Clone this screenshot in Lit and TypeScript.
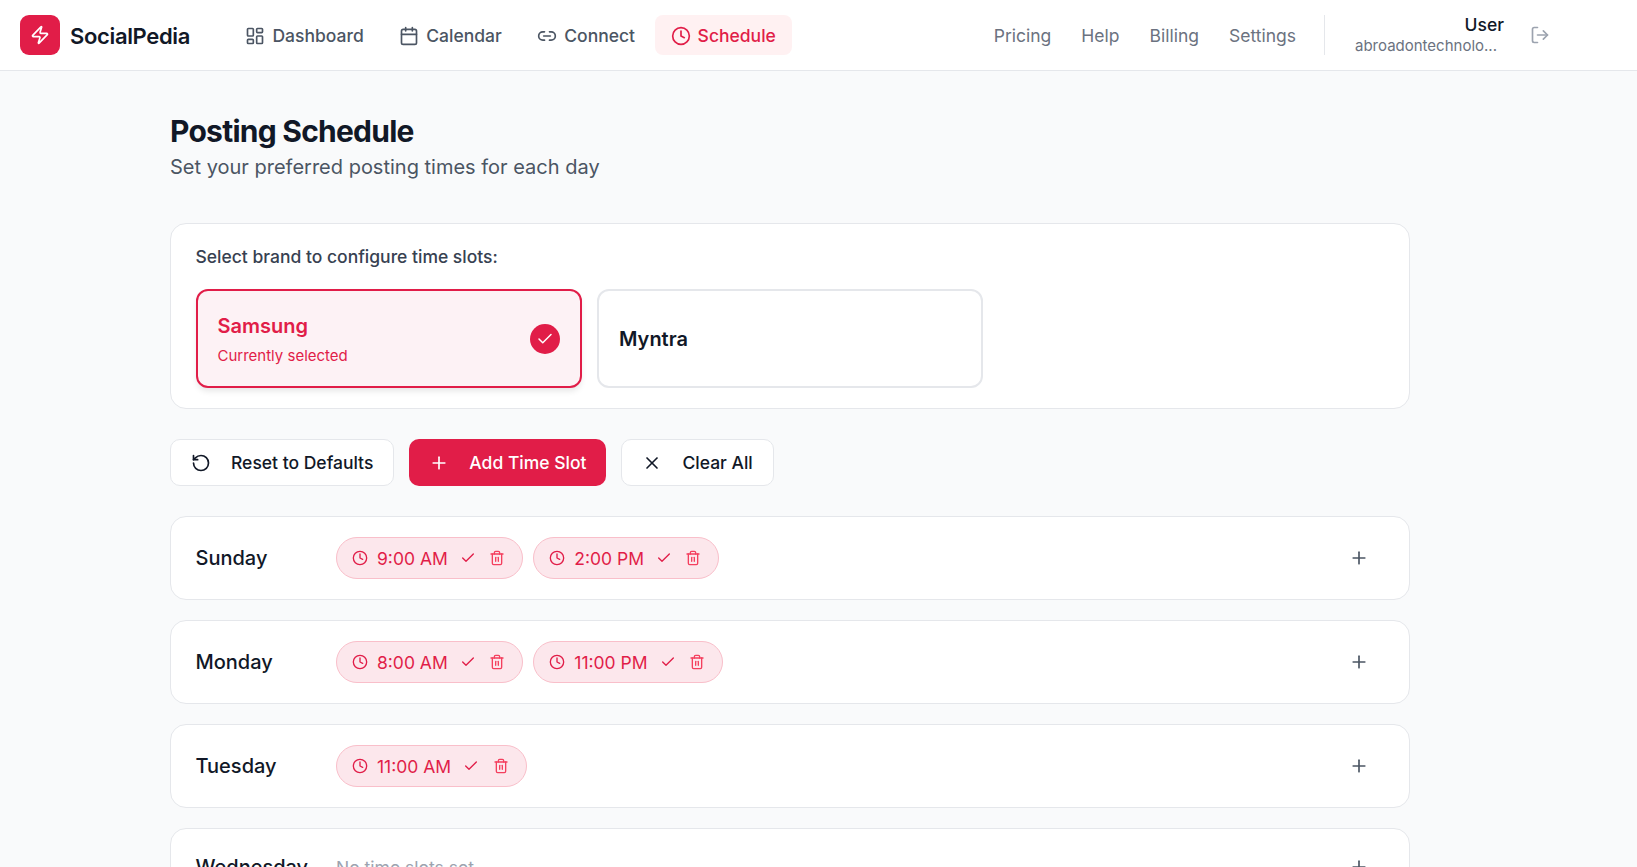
import { LitElement, html, css, svg } from "lit";
import { customElement } from "lit/decorators.js";

const P: Record<string, any> = {
  zap: svg`<path d="M4 14a1 1 0 0 1-.78-1.63l9.9-10.2a.5.5 0 0 1 .86.46l-1.92 6.02A1 1 0 0 0 13 10h7a1 1 0 0 1 .78 1.63l-9.9 10.2a.5.5 0 0 1-.86-.46l1.92-6.02A1 1 0 0 0 11 14z"/>`,
  dash: svg`<rect x="3" y="3" width="7" height="9" rx="1"/><rect x="14" y="3" width="7" height="5" rx="1"/><rect x="14" y="12" width="7" height="9" rx="1"/><rect x="3" y="16" width="7" height="5" rx="1"/>`,
  cal: svg`<path d="M8 2v4"/><path d="M16 2v4"/><rect x="3" y="4" width="18" height="18" rx="2"/><path d="M3 10h18"/>`,
  link: svg`<path d="M9 17H7A5 5 0 0 1 7 7h2"/><path d="M15 7h2a5 5 0 1 1 0 10h-2"/><line x1="8" y1="12" x2="16" y2="12"/>`,
  clock: svg`<circle cx="12" cy="12" r="10"/><polyline points="12 6 12 12 16 14"/>`,
  out: svg`<path d="M9 21H5a2 2 0 0 1-2-2V5a2 2 0 0 1 2-2h4"/><polyline points="16 17 21 12 16 7"/><line x1="21" y1="12" x2="9" y2="12"/>`,
  reset: svg`<path d="M3 12a9 9 0 1 0 9-9 9.75 9.75 0 0 0-6.74 2.74L3 8"/><path d="M3 3v5h5"/>`,
  plus: svg`<path d="M5 12h14"/><path d="M12 5v14"/>`,
  x: svg`<path d="M18 6 6 18"/><path d="m6 6 12 12"/>`,
  check: svg`<path d="M20 6 9 17l-5-5"/>`,
  trash: svg`<path d="M3 6h18"/><path d="M19 6v14c0 1-1 2-2 2H7c-1 0-2-1-2-2V6"/><path d="M8 6V4c0-1 1-2 2-2h4c1 0 2 1 2 2v2"/><line x1="10" y1="11" x2="10" y2="17"/><line x1="14" y1="11" x2="14" y2="17"/>`,
};

const icon = (n: string, size: number, sw = 2) => html`<svg
  class="ic" width=${size} height=${size} viewBox="0 0 24 24" fill="none" stroke="currentColor"
  stroke-width=${sw} stroke-linecap="round" stroke-linejoin="round">${P[n]}</svg>`;

const DAYS: [string, string[]][] = [
  ["Sunday", ["9:00 AM", "2:00 PM"]],
  ["Monday", ["8:00 AM", "11:00 PM"]],
  ["Tuesday", ["11:00 AM"]],
  ["Wednesday", []],
  ["Thursday", []],
];

@customElement("app-root")
export class AppRoot extends LitElement {
  static styles = css`
    :host { display: block; height: 100vh; overflow: hidden; background: #f9fafb; font-family: Inter, "Liberation Sans", sans-serif; color: #111827; }
    .ic { flex: none; display: block; }
    header { height: 70px; background: #fff; border-bottom: 1px solid #e5e7eb; display: flex; align-items: center; padding: 0 87px 0 20px; }
    .logo { width: 40px; height: 40px; border-radius: 9px; background: #e11d48; color: #fff; display: flex; align-items: center; justify-content: center; }
    .brand { font-size: 22px; font-weight: 600; margin-left: 10px; letter-spacing: -0.35px; color: #111827; padding-top: 1px; }
    nav { display: flex; gap: 3.5px; margin-left: 39.5px; }
    .nav { display: flex; align-items: center; gap: 7px; height: 40px; padding: 1px 16px 0; box-sizing: border-box; border-radius: 8px; font-size: 17.5px; font-weight: 500; color: #4b5563; }
    .nav.on { background: #fff1f2; color: #e11d48; }
    .right { margin-left: auto; display: flex; align-items: center; }
    .links { display: flex; gap: 30px; font-size: 17.5px; color: #6b7280; padding-top: 1px; }
    .div { width: 1px; height: 40px; background: #e5e7eb; margin: 0 30px 0 28px; }
    .user { width: 149px; text-align: right; }
    .uname { font-size: 17.5px; font-weight: 500; line-height: 20px; color: #111827; }
    .umail { font-size: 15px; line-height: 20px; margin-top: 1px; color: #6b7280; white-space: nowrap; overflow: hidden; text-overflow: ellipsis; text-align: left; }
    .logout { color: #9ca3af; margin-left: 26px; }
    main { width: 1240px; margin-left: 170px; padding-top: 42px; }
    h1 { margin: 0 0 2px; font-size: 30px; line-height: 36px; font-weight: 700; letter-spacing: -0.75px; color: #111827; }
    .sub { margin: 0; font-size: 20px; line-height: 32px; color: #4b5563; }
    .panel { margin-top: 40px; background: #fff; border: 1px solid #e5e7eb; border-radius: 16px; padding: 20px 25px; }
    .lab { font-size: 17.5px; line-height: 26px; font-weight: 500; color: #374151; margin-bottom: 19px; margin-left: -0.5px; }
    .brands { display: grid; grid-template-columns: repeat(3, 1fr); gap: 15px; }
    .bc { height: 99px; box-sizing: border-box; border: 2px solid #e5e7eb; border-radius: 12px; padding: 0 20px; display: flex; align-items: center; justify-content: space-between; background: #fff; }
    .bc.on { border-color: #e11d48; background: #fdf2f5; box-shadow: 0 4px 6px -1px rgba(0,0,0,.1); }
    .bn { font-size: 20px; font-weight: 600; color: #111827; }
    .on .bn { color: #e11d48; }
    .txt { margin-left: -0.5px; padding-top: 1px; }
    .bs { font-size: 15px; color: #e11d48; margin-top: 8px; }
    .tick { width: 30px; height: 30px; border-radius: 50%; background: #e11d48; color: #fff; display: flex; align-items: center; justify-content: center; }
    .acts { display: flex; gap: 15px; margin-top: 30px; }
    .btn { height: 47px; box-sizing: border-box; border: 1px solid #e5e7eb; background: #fff; border-radius: 10px; padding: 0 20px; display: flex; align-items: center; gap: 20px; font-size: 17.5px; font-weight: 500; color: #111827; }
    .btn.pri { background: #e11d48; border: 0; color: #fff; font-weight: 500; }
    .days { display: flex; flex-direction: column; gap: 20px; margin-top: 30px; }
    .row { height: 84px; box-sizing: border-box; background: #fff; border: 1px solid #e5e7eb; border-radius: 16px; padding-left: 24.5px; display: flex; align-items: center; flex: none; }
    .row.empty { height: 78px; }
    .dn { width: 140.5px; flex: none; font-size: 20px; font-weight: 500; color: #111827; }
    .slots { display: flex; gap: 10px; flex: 1; align-items: center; }
    .none { font-size: 17.5px; color: #9ca3af; }
    .pill { height: 42px; box-sizing: border-box; border: 1px solid #f9bfca; background: #fce7ec; border-radius: 21px; display: flex; align-items: center; padding: 0 17px 0 15px; color: #e11d48; font-size: 17.5px; }
    .pill .t { margin-left: 9px; }
    .pill .c { margin-left: 12px; }
    .pill .d { margin-left: 13.5px; color: #f43f5e; }
    .add { width: 50px; height: 50px; margin-right: 25px; display: flex; align-items: center; justify-content: center; color: #4b5563; }
  `;

  render() {
    return html`
      <header>
        <div class="logo">${icon("zap", 20)}</div>
        <div class="brand">SocialPedia</div>
        <nav>
          <div class="nav">${icon("dash", 20)}Dashboard</div>
          <div class="nav">${icon("cal", 20)}Calendar</div>
          <div class="nav">${icon("link", 20)}Connect</div>
          <div class="nav on">${icon("clock", 20)}Schedule</div>
        </nav>
        <div class="right">
          <div class="links"><span>Pricing</span><span>Help</span><span>Billing</span><span>Settings</span></div>
          <div class="div"></div>
          <div class="user">
            <div class="uname">User</div>
            <div class="umail">abroadontechnolo...</div>
          </div>
          <div class="logout">${icon("out", 20)}</div>
        </div>
      </header>
      <main>
        <h1>Posting Schedule</h1>
        <p class="sub">Set your preferred posting times for each day</p>
        <section class="panel">
          <div class="lab">Select brand to configure time slots:</div>
          <div class="brands">
            <div class="bc on">
              <div class="txt"><div class="bn">Samsung</div><div class="bs">Currently selected</div></div>
              <div class="tick">${icon("check", 18)}</div>
            </div>
            <div class="bc"><div class="bn">Myntra</div></div>
          </div>
        </section>
        <div class="acts">
          <div class="btn">${icon("reset", 20)}Reset to Defaults</div>
          <div class="btn pri">${icon("plus", 20)}Add Time Slot</div>
          <div class="btn">${icon("x", 20)}Clear All</div>
        </div>
        <div class="days">
          ${DAYS.map(([d, ts]) => html`
            <div class="row ${ts.length ? "" : "empty"}">
              <div class="dn">${d}</div>
              <div class="slots">
                ${ts.length ? ts.map((t) => html`
                  <div class="pill">
                    ${icon("clock", 16)}<span class="t">${t}</span>
                    <span class="c">${icon("check", 16)}</span>
                    <span class="d">${icon("trash", 16)}</span>
                  </div>`) : html`<span class="none">No time slots set</span>`}
              </div>
              <div class="add">${icon("plus", 20)}</div>
            </div>`)}
        </div>
      </main>
    `;
  }
}
